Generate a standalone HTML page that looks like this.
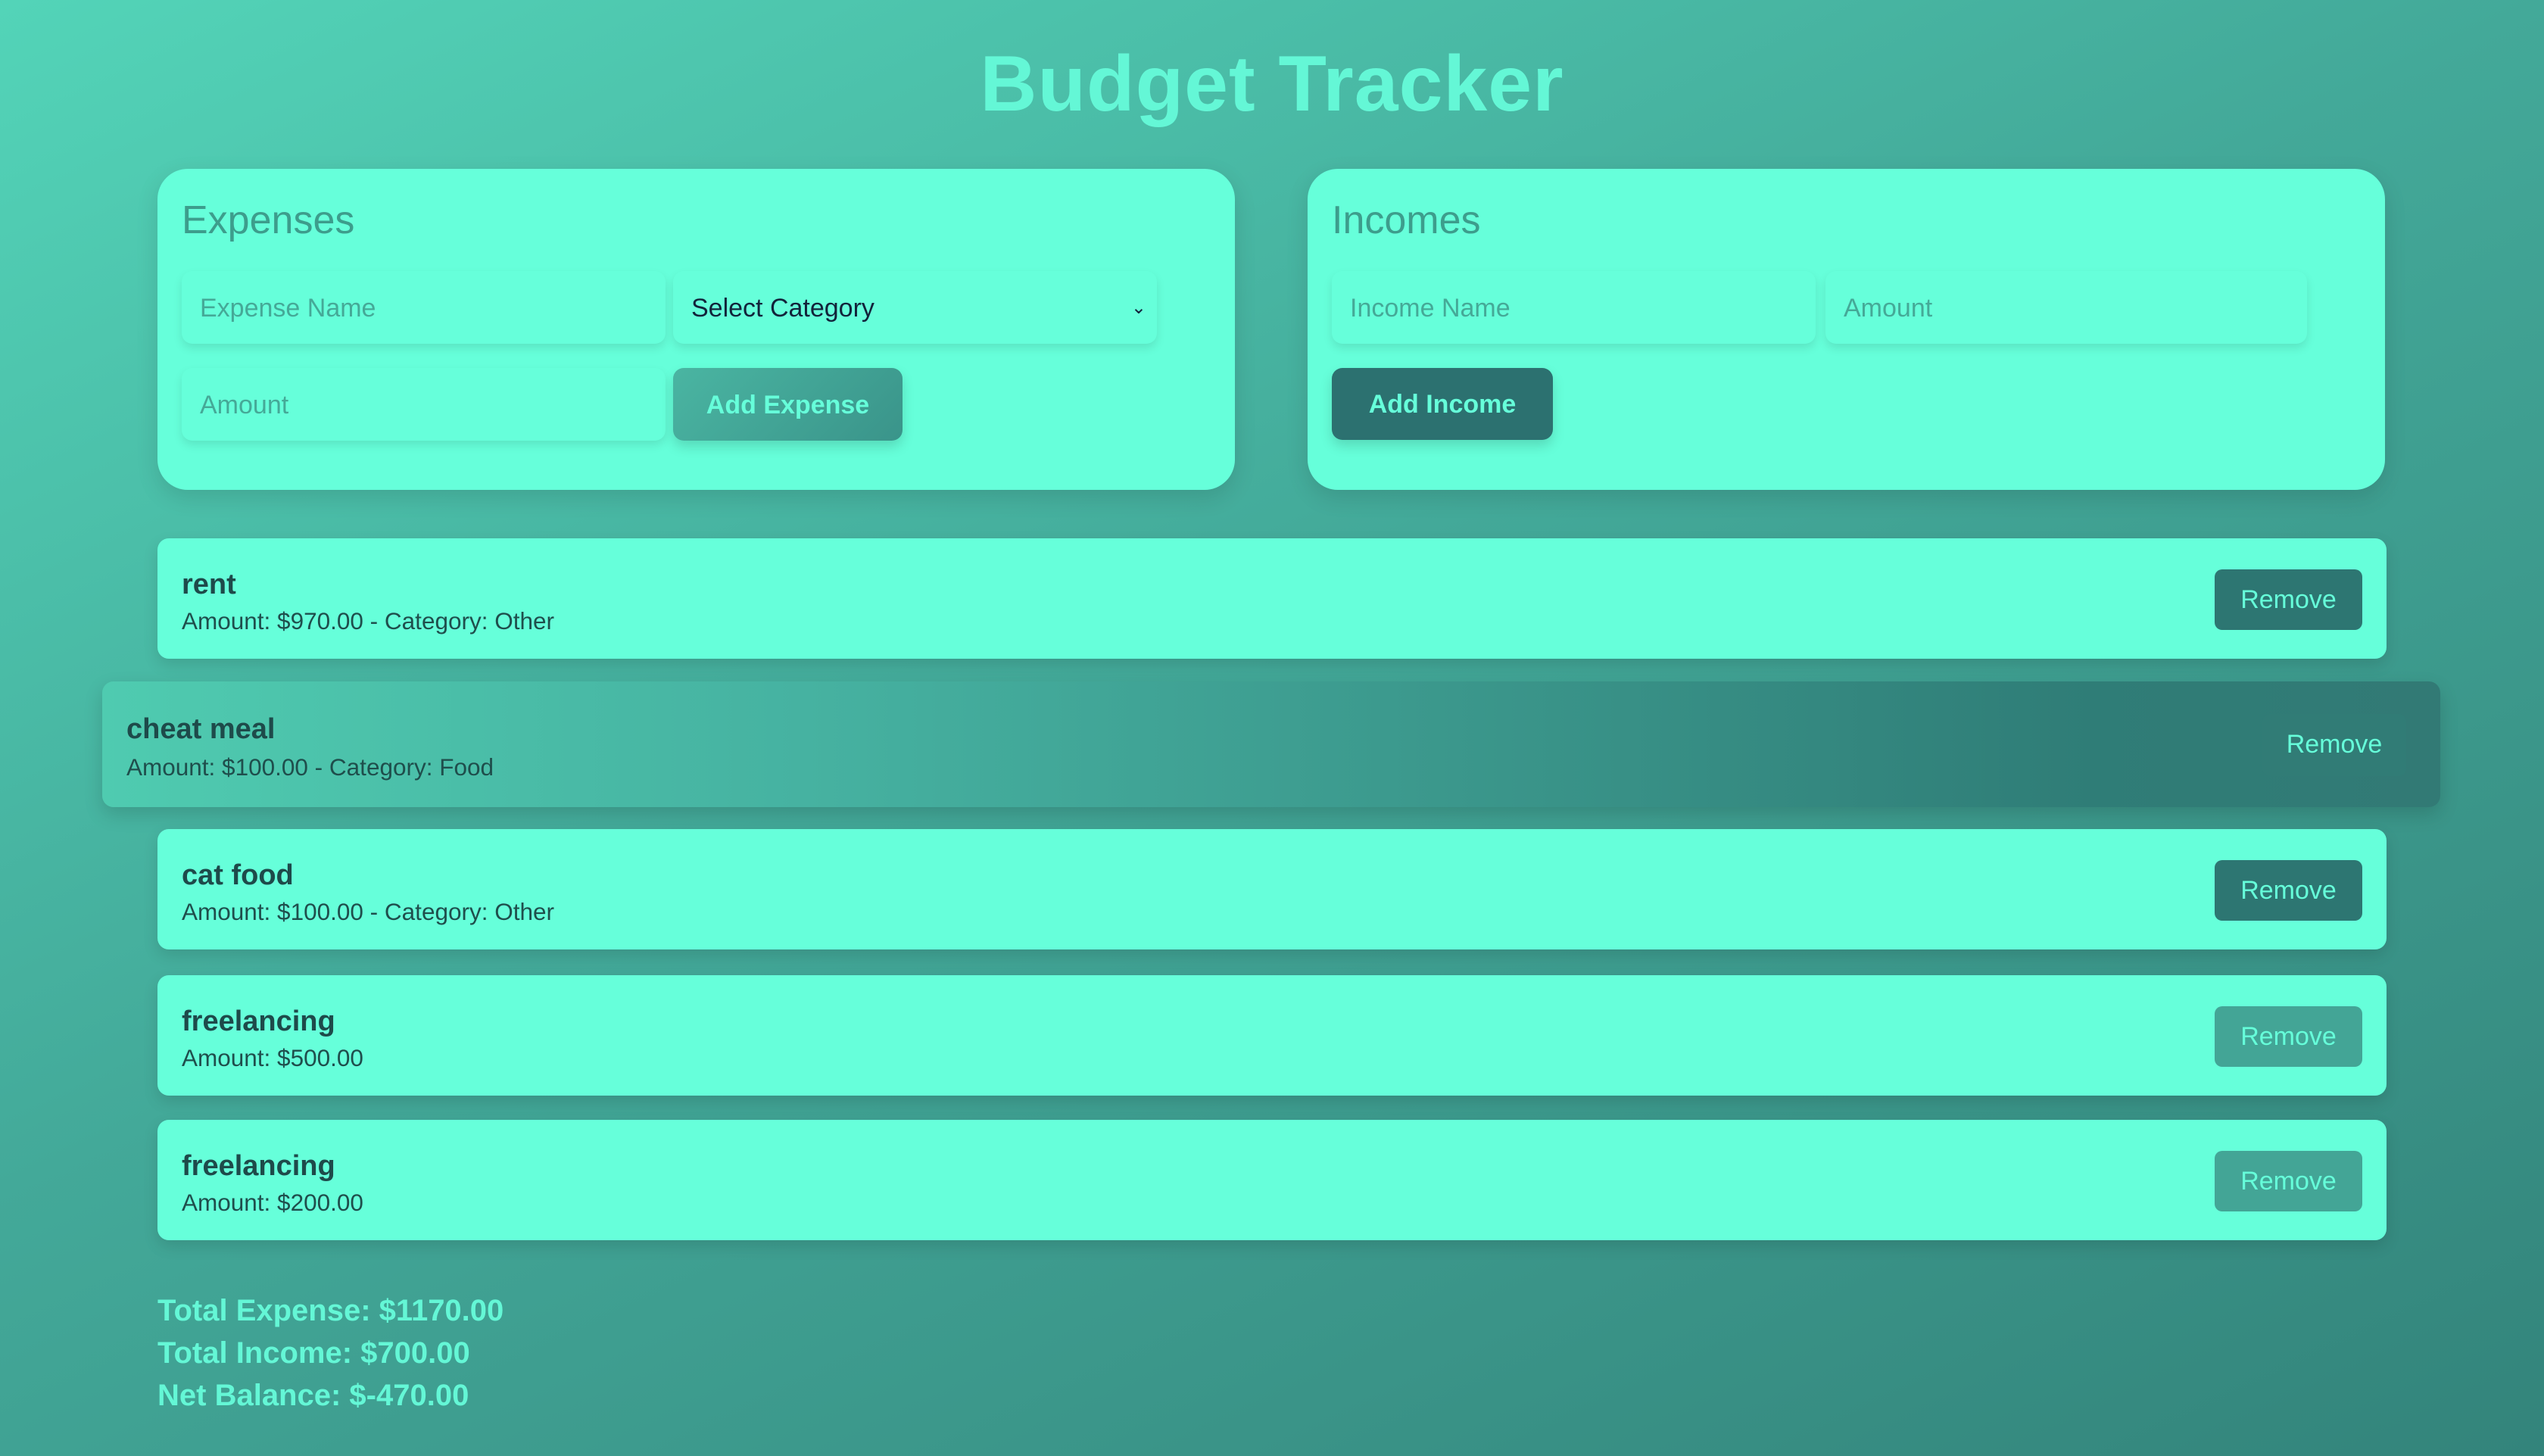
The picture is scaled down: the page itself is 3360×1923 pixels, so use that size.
<!DOCTYPE html>
<html><head><meta charset="utf-8"><style>
*{box-sizing:border-box;margin:0;padding:0}
body{width:3360px;height:1923px;overflow:hidden;position:relative;font-family:"Liberation Sans",sans-serif;background:linear-gradient(155deg,#53d4b8 0%,#43a999 45%,#33847b 100%)}
h1{position:absolute;left:0;width:3360px;top:52px;text-align:center;font-size:104px;font-weight:bold;color:#64f7d6;letter-spacing:1px}
.card{position:absolute;background:#66ffda;border-radius:40px;box-shadow:0 10px 30px rgba(0,0,0,.12)}
.card h2{position:absolute;left:32px;top:38px;font-size:52px;font-weight:normal;color:#3d9d8c}
.inp{position:absolute;height:96px;border-radius:14px;background:#66ffda;box-shadow:0 6px 12px rgba(0,0,0,.1);font-size:34px;color:#45a997;padding-left:24px;line-height:98px}
.btn{position:absolute;border-radius:14px;font-size:34px;font-weight:bold;color:#66ffda;text-align:center}
.item{position:absolute;left:208px;width:2944px;height:159px;background:#66ffda;border-radius:15px;box-shadow:0 8px 20px rgba(0,0,0,.12)}
.item .n{position:absolute;left:32px;top:40px;font-size:38px;font-weight:bold;color:#1e4a4a}
.item .d{position:absolute;left:32px;top:91px;font-size:31.5px;color:#1f4e4c}
.rm{position:absolute;right:32px;top:41px;width:195px;height:80px;border-radius:10px;font-size:34px;color:#66ffda;text-align:center;line-height:80px}
.tot{position:absolute;left:208px;font-size:40px;font-weight:bold;color:#64f7d6}
</style></head><body>
<h1>Budget Tracker</h1>
<div class="card" style="left:208px;top:223px;width:1423px;height:424px">
<h2>Expenses</h2>
<div class="inp" style="left:32px;top:135px;width:639px">Expense Name</div>
<div class="inp" style="left:681px;top:135px;width:639px;color:#12233a">Select Category<span style="position:absolute;right:14px;top:0;font-size:24px">&#8964;</span></div>
<div class="inp" style="left:32px;top:263px;width:639px">Amount</div>
<div class="btn" style="left:681px;top:263px;width:303px;height:96px;line-height:98px;background:linear-gradient(135deg,#4ab5a2,#3a948a);box-shadow:0 8px 16px rgba(0,0,0,.15)">Add Expense</div>
</div>
<div class="card" style="left:1727px;top:223px;width:1423px;height:424px">
<h2>Incomes</h2>
<div class="inp" style="left:32px;top:135px;width:639px">Income Name</div>
<div class="inp" style="left:684px;top:135px;width:636px">Amount</div>
<div class="btn" style="left:32px;top:263px;width:292px;height:95px;line-height:97px;background:#2c7170;box-shadow:0 8px 16px rgba(0,0,0,.15)">Add Income</div>
</div>
<div class="item" style="top:711px"><div class="n">rent</div><div class="d">Amount: $970.00 - Category: Other</div><div class="rm" style="background:#2d7672">Remove</div></div>
<div class="item" style="left:135px;width:3088px;top:900px;height:166px;background:linear-gradient(90deg,#4fcbb0 0%,#46b2a1 30%,#3a958a 60%,#2f7d77 85%,#327a75 100%);box-shadow:0 10px 25px rgba(0,0,0,.15)"><div class="n" style="top:42px">cheat meal</div><div class="d" style="top:95px">Amount: $100.00 - Category: Food</div><div class="rm" style="right:45px;top:43px;width:190px;height:82px;background:#317c76">Remove</div></div>
<div class="item" style="top:1095px"><div class="n">cat food</div><div class="d">Amount: $100.00 - Category: Other</div><div class="rm" style="background:#2d7672">Remove</div></div>
<div class="item" style="top:1288px"><div class="n">freelancing</div><div class="d">Amount: $500.00</div><div class="rm" style="background:#43a596">Remove</div></div>
<div class="item" style="top:1479px"><div class="n">freelancing</div><div class="d">Amount: $200.00</div><div class="rm" style="background:#43a596">Remove</div></div>
<div class="tot" style="top:1709px">Total Expense: $1170.00</div>
<div class="tot" style="top:1765px">Total Income: $700.00</div>
<div class="tot" style="top:1821px">Net Balance: $-470.00</div>
</body></html>
